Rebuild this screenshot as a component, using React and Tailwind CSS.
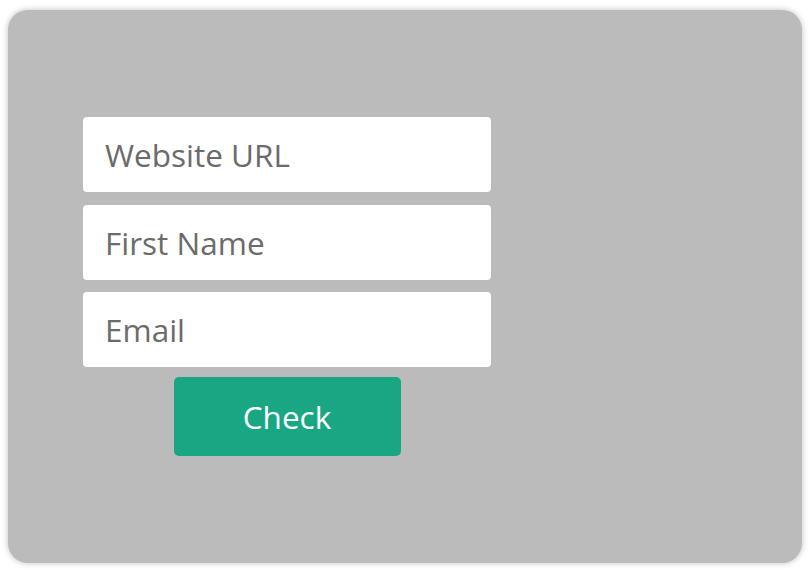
export default function App() {
  return (
    <div className="w-[810px] h-[570px] bg-white p-[8px] pt-[10px]" style={{ fontFamily: '"Open Sans", sans-serif' }}>
      <div className="w-[794px] h-[553px] rounded-[20px] bg-[#bbbbbb] shadow-[0_0_6px_rgba(0,0,0,0.25)] pl-[75px] pt-[107px]">
        <div className="w-[408px] flex flex-col">
          <div className="h-[75px] bg-white rounded-[4px] flex items-center pl-[22px] text-[31.5px] text-[#6b6b6b]">Website URL</div>
          <div className="h-[75px] bg-white rounded-[4px] flex items-center pl-[22px] text-[31.5px] text-[#6b6b6b] mt-[13px]">First Name</div>
          <div className="h-[75px] bg-white rounded-[4px] flex items-center pl-[22px] text-[31.5px] text-[#6b6b6b] mt-[12px]">Email</div>
          <div className="flex justify-center mt-[10px]">
            <div className="w-[227px] h-[79px] bg-[#19a783] rounded-[5px] flex items-center justify-center text-white text-[31.5px]">Check</div>
          </div>
        </div>
      </div>
    </div>
  );
}
